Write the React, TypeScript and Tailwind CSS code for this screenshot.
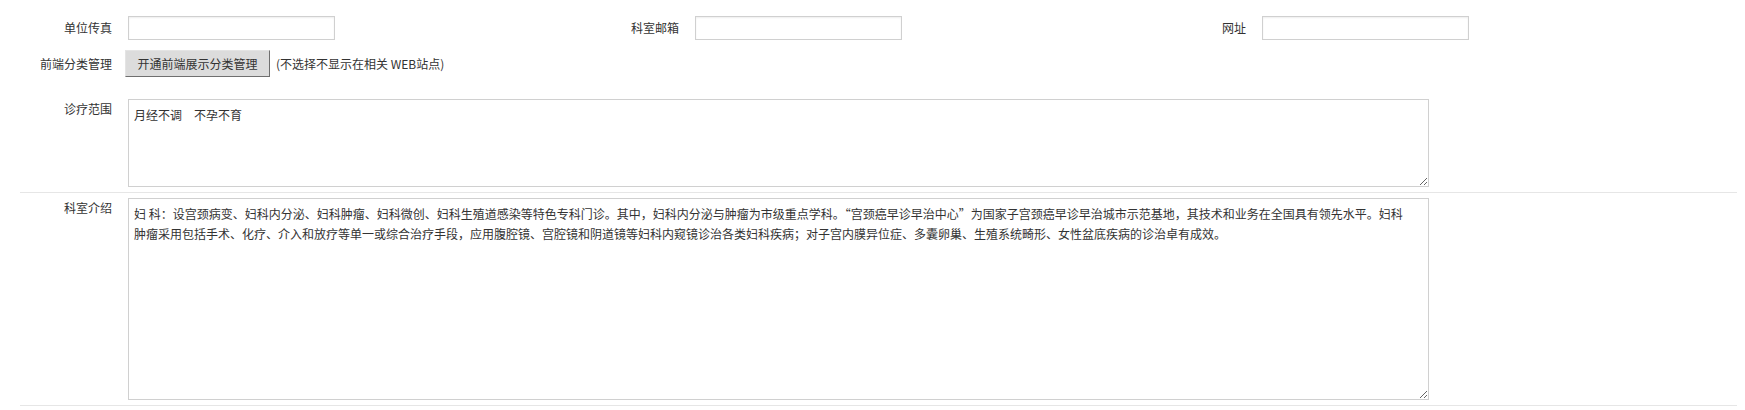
import React from "react";

const fields = [
  { label: "单位传真", name: "fax" },
  { label: "科室邮箱", name: "email" },
  { label: "网址", name: "site" },
];

const scope = "月经不调　不孕不育";

const intro =
  "妇 科：设宫颈病变、妇科内分泌、妇科肿瘤、妇科微创、妇科生殖道感染等特色专科门诊。其中，妇科内分泌与肿瘤为市级重点学科。“宫颈癌早诊早治中心”为国家子宫颈癌早诊早治城市示范基地，其技术和业务在全国具有领先水平。妇科肿瘤采用包括手术、化疗、介入和放疗等单一或综合治疗手段，应用腹腔镜、宫腔镜和阴道镜等妇科内窥镜诊治各类妇科疾病；对子宫内膜异位症、多囊卵巢、生殖系统畸形、女性盆底疾病的诊治卓有成效。";

const inputCls =
  "ml-[16px] h-6 w-[207px] border border-[#d0d0d0] bg-white px-1 shadow-[inset_0_1px_2px_rgba(0,0,0,0.07)] outline-none";

const areaCls =
  "ml-[16px] w-[1301px] border border-[#d0d0d0] bg-white pl-[5px] pr-[14px] py-[5px] leading-[20px] text-[#333] outline-none";

export default function App() {
  return (
    <div className="h-[410px] w-[1745px] bg-white pt-4 text-[12px] text-[#333] [font-family:'Noto_Sans_CJK_SC',sans-serif]">
      {/* top row: three inputs */}
      <div className="flex h-6">
        {fields.map((f) => (
          <div key={f.name} className="flex w-[567px] items-center">
            <span className="w-[112px] text-right leading-none">{f.label}</span>
            <input type="text" className={inputCls} />
          </div>
        ))}
      </div>

      {/* category button */}
      <div className="mt-[10px] flex h-[27px] items-center">
        <span className="w-[112px] text-right leading-none">前端分类管理</span>
        <button
          type="button"
          className="ml-[13px] h-[27px] w-[145px] border border-t-[#e4e4e4] border-l-[#e4e4e4] border-r-[#6f6f6f] border-b-[#6f6f6f] bg-[#dcdcdc] text-[#333]"
        >
          开通前端展示分类管理
        </button>
        <span className="ml-[6px] leading-none">(不选择不显示在相关 WEB站点)</span>
      </div>

      {/* textareas */}
      <div className="mt-[22px] ml-[20px] flex w-[1717px] border-b border-[#e6e6e6] pb-[5px]">
        <span className="w-[92px] text-right leading-[20px]">诊疗范围</span>
        <textarea readOnly defaultValue={scope} className={`${areaCls} h-[88px]`} />
      </div>
      <div className="ml-[20px] flex w-[1717px] border-b border-[#e6e6e6] pt-[5px] pb-[5px]">
        <span className="w-[92px] text-right leading-[20px]">科室介绍</span>
        <textarea readOnly defaultValue={intro} className={`${areaCls} h-[202px]`} />
      </div>
    </div>
  );
}
